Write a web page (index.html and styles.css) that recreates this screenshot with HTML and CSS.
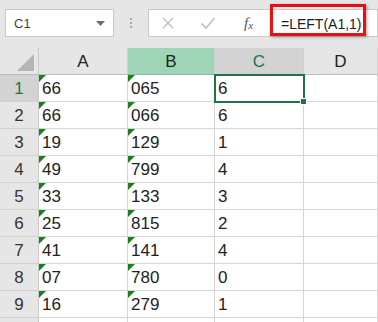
FILE: index.html
```html
<!DOCTYPE html>
<html lang="en">
<head>
  <meta charset="UTF-8">
  <title>LEFT formula</title>
  <link rel="stylesheet" href="styles.css">
</head>
<body>
  <!-- Formula bar -->
  <div class="toolbar">
    <div class="namebox">
      <span>C1</span>
      <svg class="caret" width="9" height="5" viewBox="0 0 9 5"><path d="M0 0H9L4.5 5Z" fill="#6f6f6f"/></svg>
    </div>
    <div class="dots"><i></i><i></i><i></i></div>
    <div class="formula-bar">
      <div class="fx-buttons">
        <svg width="14" height="14" viewBox="0 0 14 14"><path d="M2 2L12 12M12 2L2 12" stroke="#c4c4c4" stroke-width="1.6"/></svg>
        <svg width="16" height="14" viewBox="0 0 16 14"><path d="M1.5 7.5L6 12L14.5 2" stroke="#c4c4c4" stroke-width="1.8" fill="none"/></svg>
        <span class="fx">f<sub>x</sub></span>
      </div>
      <div class="formula">=LEFT(A1,1)</div>
      <div class="highlight"></div>
    </div>
  </div>

  <!-- Sheet -->
  <div class="sheet">
    <div class="corner"><span class="corner-tri"></span></div>
    <div class="col-head">A</div>
    <div class="col-head picked">B</div>
    <div class="col-head active">C</div>
    <div class="col-head">D</div>

    <div class="row-head active">1</div>
    <div class="cell text">66</div><div class="cell text">065</div><div class="cell selected">6<span class="handle"></span></div><div class="cell"></div>
    <div class="row-head">2</div>
    <div class="cell text">66</div><div class="cell text">066</div><div class="cell">6</div><div class="cell"></div>
    <div class="row-head">3</div>
    <div class="cell text">19</div><div class="cell text">129</div><div class="cell">1</div><div class="cell"></div>
    <div class="row-head">4</div>
    <div class="cell text">49</div><div class="cell text">799</div><div class="cell">4</div><div class="cell"></div>
    <div class="row-head">5</div>
    <div class="cell text">33</div><div class="cell text">133</div><div class="cell">3</div><div class="cell"></div>
    <div class="row-head">6</div>
    <div class="cell text">25</div><div class="cell text">815</div><div class="cell">2</div><div class="cell"></div>
    <div class="row-head">7</div>
    <div class="cell text">41</div><div class="cell text">141</div><div class="cell">4</div><div class="cell"></div>
    <div class="row-head">8</div>
    <div class="cell text">07</div><div class="cell text">780</div><div class="cell">0</div><div class="cell"></div>
    <div class="row-head">9</div>
    <div class="cell text">16</div><div class="cell text">279</div><div class="cell">1</div><div class="cell"></div>
    <div class="row-head"></div>
    <div class="cell"></div><div class="cell"></div><div class="cell"></div><div class="cell"></div>
  </div>
</body>
</html>
```

FILE: styles.css
```css
body {
  margin: 0;
  width: 378px;
  height: 322px;
  overflow: hidden;
  background: #ffffff;
  font-family: 'Liberation Sans', Arial, sans-serif;
  color: #222;
}
.toolbar {
  height: 48px;
  box-sizing: border-box;
  padding: 9px 0 0 5px;
  background: #e6e6e6;
  display: flex;
  align-items: flex-start;
}
.namebox {
  width: 109px;
  height: 28px;
  box-sizing: border-box;
  border: 1px solid #c9c9c9;
  background: #fff;
  display: flex;
  align-items: center;
  justify-content: space-between;
  padding: 0 8px 0 8px;
  font-size: 13px;
  color: #444;
}
.dots {
  width: 34px;
  height: 28px;
  display: flex;
  flex-direction: column;
  align-items: center;
  justify-content: center;
  gap: 2px;
}
.dots i {
  width: 2px;
  height: 2px;
  background: #a8a8a8;
}
.formula-bar {
  flex: 1;
  height: 28px;
  display: flex;
  position: relative;
}
.fx-buttons {
  width: 121px;
  height: 28px;
  box-sizing: border-box;
  border: 1px solid #c9c9c9;
  border-right: none;
  background: #fff;
  display: flex;
  align-items: center;
  padding-left: 12px;
  gap: 25px;
}
.fx {
  font-family: 'Liberation Serif', serif;
  font-style: italic;
  font-size: 15px;
  color: #555;
  margin-left: 3px;
}
.fx sub {
  font-size: 11px;
  vertical-align: -1px;
}
.formula {
  flex: 1;
  height: 28px;
  box-sizing: border-box;
  border: 1px solid #c9c9c9;
  border-left: none;
  background: #fff;
  padding-left: 12px;
  font-size: 14px;
  line-height: 28px;
  color: #222;
}
.highlight {
  position: absolute;
  left: 122px;
  top: -5px;
  width: 96px;
  height: 32px;
  box-sizing: border-box;
  border: 3px solid #e81010;
  box-shadow: 1px 1px 3px rgba(0, 0, 0, 0.35);
}
.sheet {
  display: grid;
  grid-template-columns: 39px 89px 87px 89px 1fr;
  grid-auto-rows: 27px;
  height: 274px;
  overflow: hidden;
}
.corner,
.col-head,
.row-head {
  background: #e6e6e6;
  border-right: 1px solid #c8c8c8;
  border-bottom: 1px solid #bdbdbd;
  box-sizing: border-box;
}
.corner {
  position: relative;
}
.corner-tri {
  position: absolute;
  right: 4px;
  bottom: 3px;
  width: 0;
  height: 0;
  border-left: 17px solid transparent;
  border-bottom: 17px solid #b5b5b5;
}
.col-head {
  display: flex;
  justify-content: center;
  align-items: flex-end;
  padding-bottom: 2px;
  font-size: 17px;
  color: #222;
  border-right-color: #d0d0d0;
}
.col-head.picked {
  background: #9fd5b7;
  border-bottom-color: #8fb9a0;
}
.col-head.active,
.row-head.active {
  background: #d3d3d3;
  color: #217346;
}
.row-head {
  display: flex;
  justify-content: center;
  align-items: flex-end;
  padding-bottom: 2px;
  font-size: 17px;
  color: #333;
  border-bottom-color: #cfcfcf;
}
.cell {
  position: relative;
  border-right: 1px solid #d6d6d6;
  border-bottom: 1px solid #d6d6d6;
  box-sizing: border-box;
  display: flex;
  align-items: flex-end;
  padding: 0 0 2px 3px;
  font-size: 17px;
  color: #222;
}
.cell.text::before {
  content: '';
  position: absolute;
  left: 0;
  top: 0;
  border-top: 7px solid #1b7f1b;
  border-right: 7px solid transparent;
}
.cell.selected {
  outline: 2px solid #217346;
  outline-offset: -1px;
  z-index: 1;
}
.handle {
  position: absolute;
  right: -4px;
  bottom: -4px;
  width: 5px;
  height: 5px;
  background: #217346;
  border: 1px solid #fff;
}
```
